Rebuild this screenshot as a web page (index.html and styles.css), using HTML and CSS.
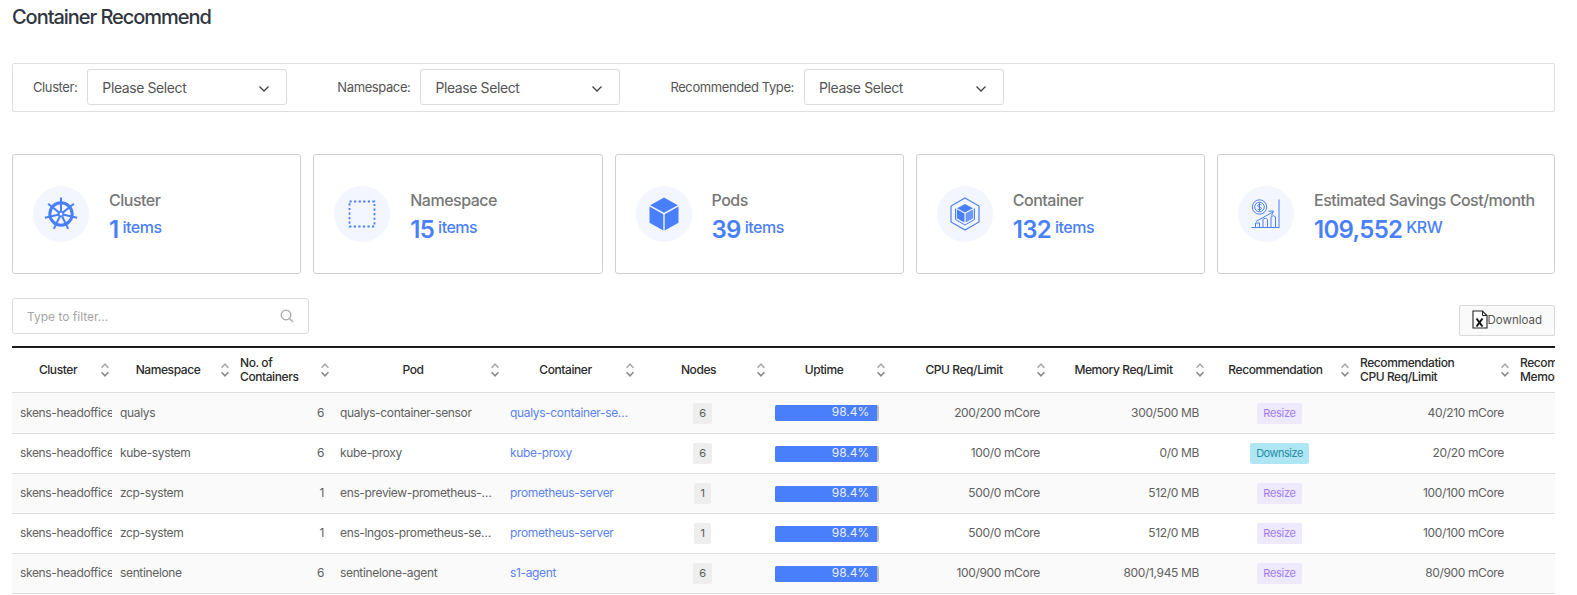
FILE: index.html
```html
<!DOCTYPE html>
<html lang="en">
<head>
<meta charset="utf-8">
<title>Container Recommend</title>
<link rel="stylesheet" href="styles.css">
</head>
<body>
<svg class="defs" width="0" height="0" aria-hidden="true">
  <symbol id="sort" viewBox="0 0 8 14">
    <path class="sort-up" d="M.6 4.800 4 1.200 7.400 4.800"/>
    <path class="sort-down" d="M.6 9.200 4 12.800 7.400 9.200"/>
  </symbol>
  <symbol id="chev" viewBox="0 0 12 8">
    <path d="M1.500 1.500 6 6l4.500-4.500" fill="none" stroke="#444" stroke-width="1.300"/>
  </symbol>
</svg>
<main class="page">
  <h1 class="title">Container Recommend</h1>

  <section class="filters">
    <label class="filter-label">Cluster:</label>
    <div class="select"><span>Please Select</span><svg class="chev"><use href="#chev"/></svg></div>
    <label class="filter-label gap">Namespace:</label>
    <div class="select"><span>Please Select</span><svg class="chev"><use href="#chev"/></svg></div>
    <label class="filter-label gap">Recommended Type:</label>
    <div class="select"><span>Please Select</span><svg class="chev"><use href="#chev"/></svg></div>
  </section>

  <section class="cards">
    <article class="card">
      <div class="bubble">
        <svg width="36" height="36" viewBox="-18 -18 36 36">
          <g class="helm">
            <circle r="11.200" fill="none" stroke-width="3"/>
            <circle r="2.400" fill="none" stroke-width="1.800"/>
            <line y1="-3" y2="-16.500"/>
            <line y1="-3" y2="-16.500" transform="rotate(51.430)"/>
            <line y1="-3" y2="-16.500" transform="rotate(102.860)"/>
            <line y1="-3" y2="-16.500" transform="rotate(154.290)"/>
            <line y1="-3" y2="-16.500" transform="rotate(205.710)"/>
            <line y1="-3" y2="-16.500" transform="rotate(257.140)"/>
            <line y1="-3" y2="-16.500" transform="rotate(308.570)"/>
          </g>
        </svg>
      </div>
      <div class="card-text">
        <div class="card-label">Cluster</div>
        <div class="card-value"><strong>1</strong><span>items</span></div>
      </div>
    </article>
    <article class="card">
      <div class="bubble">
        <svg width="28" height="28" viewBox="0 0 28 28">
          <rect x="1.500" y="1.500" width="25" height="25" fill="none" stroke="#4a7ffb" stroke-width="1.800" stroke-dasharray="2.200 2.370"/>
        </svg>
      </div>
      <div class="card-text">
        <div class="card-label">Namespace</div>
        <div class="card-value"><strong>15</strong><span>items</span></div>
      </div>
    </article>
    <article class="card">
      <div class="bubble">
        <svg width="30" height="34" viewBox="0 0 30 34">
          <path fill="#4a7ffb" d="M15 .500 28.800 8.200 15 15.800 1.200 8.200z"/>
          <path fill="#4a7ffb" d="M.500 9.500 14.300 17.200V33.500L.500 25.800z"/>
          <path fill="#4a7ffb" d="M29.500 9.500 15.700 17.200V33.500L29.500 25.800z"/>
        </svg>
      </div>
      <div class="card-text">
        <div class="card-label">Pods</div>
        <div class="card-value"><strong>39</strong><span>items</span></div>
      </div>
    </article>
    <article class="card">
      <div class="bubble">
        <svg width="30" height="34" viewBox="0 0 30 34">
          <path fill="none" stroke="#4a7ffb" stroke-width="1.200" d="M15 1 29 9v16l-14 8-14-8V9z"/>
          <path fill="none" stroke="#4a7ffb" stroke-width="1" d="M5.500 11.500v11L15 28l9.500-5.500v-11"/>
          <path fill="#4a7ffb" d="M15 7 23 11.200 15 15.600 7 11.200z"/>
          <path fill="#4a7ffb" d="M6.800 12.300 14.400 16.500V25.500L6.800 21.200z"/>
          <path fill="#4a7ffb" opacity=".8" d="M23.200 12.300 15.600 16.500V25.500L23.200 21.200z"/>
        </svg>
      </div>
      <div class="card-text">
        <div class="card-label">Container</div>
        <div class="card-value"><strong>132</strong><span>items</span></div>
      </div>
    </article>
    <article class="card card-wide">
      <div class="bubble">
        <svg width="30" height="30" viewBox="0 0 30 30">
          <g fill="none" stroke="#4a7ffb" stroke-width="1">
            <circle cx="8.500" cy="8" r="7.200"/>
            <circle cx="8.500" cy="8" r="4.800"/>
            <path d="M10.300 6c-1-1-3.600-.8-3.600.7 0 1.800 3.700.8 3.700 2.700 0 1.500-2.700 1.600-3.800.6M8.500 3.800v8.400"/>
            <path d="M5 22.500 22 13M17.500 12.200l5-.2-2 4.500"/>
            <path d="M28 .5V28M.5 28.500h28"/>
            <path d="M4.500 28v-4h4v4M12 28v-7.500c0-1.500 4.500-1.500 4.500 0V28M20 28V18c0-1.500 4.500-1.500 4.500 0v10"/>
          </g>
        </svg>
      </div>
      <div class="card-text">
        <div class="card-label">Estimated Savings Cost/month</div>
        <div class="card-value"><strong>109,552</strong><span>KRW</span></div>
      </div>
    </article>
  </section>

  <section class="toolbar">
    <div class="search">
      <span class="placeholder">Type to filter...</span>
      <svg width="14" height="14" viewBox="0 0 14 14" fill="none" stroke="#a8a8a8" stroke-width="1.300"><circle cx="6" cy="6" r="4.800"/><path d="M9.500 9.500 13 13"/></svg>
    </div>
    <button class="download" type="button">
      <svg width="16" height="19" viewBox="0 0 16 19">
        <path d="M1 1h9.500L15 5.500V18H1z" fill="#fff" stroke="#222" stroke-width="1.100"/>
        <path d="M10.500 1v4.500H15" fill="none" stroke="#222"/>
        <path d="M4.500 8.500 10.500 16.500M10.500 8.500 4.500 16.500" stroke="#111" stroke-width="2"/>
      </svg>
      <span>Download</span>
    </button>
  </section>

  <div class="table-wrap">
    <table class="grid">
      <colgroup>
        <col class="c1"><col class="c2"><col class="c3"><col class="c4"><col class="c5"><col class="c6">
        <col class="c7"><col class="c8"><col class="c9"><col class="c10"><col class="c11"><col class="c12">
      </colgroup>
      <thead>
        <tr>
          <th><div class="th"><span class="th-label">Cluster</span><svg class="sort"><use href="#sort"/></svg></div></th>
          <th><div class="th"><span class="th-label">Namespace</span><svg class="sort"><use href="#sort"/></svg></div></th>
          <th><div class="th"><span class="th-label left">No. of<br>Containers</span><svg class="sort"><use href="#sort"/></svg></div></th>
          <th><div class="th"><span class="th-label">Pod</span><svg class="sort"><use href="#sort"/></svg></div></th>
          <th><div class="th"><span class="th-label">Container</span><svg class="sort"><use href="#sort"/></svg></div></th>
          <th><div class="th"><span class="th-label">Nodes</span><svg class="sort"><use href="#sort"/></svg></div></th>
          <th><div class="th"><span class="th-label">Uptime</span><svg class="sort"><use href="#sort"/></svg></div></th>
          <th><div class="th"><span class="th-label">CPU Req/Limit</span><svg class="sort"><use href="#sort"/></svg></div></th>
          <th><div class="th"><span class="th-label">Memory Req/Limit</span><svg class="sort"><use href="#sort"/></svg></div></th>
          <th><div class="th"><span class="th-label">Recommendation</span><svg class="sort"><use href="#sort"/></svg></div></th>
          <th><div class="th"><span class="th-label left">Recommendation<br>CPU Req/Limit</span><svg class="sort"><use href="#sort"/></svg></div></th>
          <th><div class="th"><span class="th-label left">Recommendation<br>Memory Req/Limit</span><svg class="sort"><use href="#sort"/></svg></div></th>
        </tr>
      </thead>
      <tbody>
        <tr>
          <td class="clip">skens-headoffice</td><td>qualys</td><td class="num">6</td><td class="ell">qualys-container-sensor</td>
          <td class="ell link">qualys-container-sensor</td><td class="mid"><span class="tag">6</span></td>
          <td class="up"><div class="bar"><div class="fill">98.4%</div></div></td>
          <td class="num">200/200 mCore</td><td class="num">300/500 MB</td>
          <td class="mid"><span class="tag resize">Resize</span></td><td class="num">40/210 mCore</td><td class="num"></td>
        </tr>
        <tr>
          <td class="clip">skens-headoffice</td><td>kube-system</td><td class="num">6</td><td class="ell">kube-proxy</td>
          <td class="ell link">kube-proxy</td><td class="mid"><span class="tag">6</span></td>
          <td class="up"><div class="bar"><div class="fill">98.4%</div></div></td>
          <td class="num">100/0 mCore</td><td class="num">0/0 MB</td>
          <td class="mid"><span class="tag downsize">Downsize</span></td><td class="num">20/20 mCore</td><td class="num"></td>
        </tr>
        <tr>
          <td class="clip">skens-headoffice</td><td>zcp-system</td><td class="num">1</td><td class="ell">ens-preview-prometheus-server</td>
          <td class="ell link">prometheus-server</td><td class="mid"><span class="tag">1</span></td>
          <td class="up"><div class="bar"><div class="fill">98.4%</div></div></td>
          <td class="num">500/0 mCore</td><td class="num">512/0 MB</td>
          <td class="mid"><span class="tag resize">Resize</span></td><td class="num">100/100 mCore</td><td class="num"></td>
        </tr>
        <tr>
          <td class="clip">skens-headoffice</td><td>zcp-system</td><td class="num">1</td><td class="ell">ens-lngos-prometheus-server</td>
          <td class="ell link">prometheus-server</td><td class="mid"><span class="tag">1</span></td>
          <td class="up"><div class="bar"><div class="fill">98.4%</div></div></td>
          <td class="num">500/0 mCore</td><td class="num">512/0 MB</td>
          <td class="mid"><span class="tag resize">Resize</span></td><td class="num">100/100 mCore</td><td class="num"></td>
        </tr>
        <tr>
          <td class="clip">skens-headoffice</td><td>sentinelone</td><td class="num">6</td><td class="ell">sentinelone-agent</td>
          <td class="ell link">s1-agent</td><td class="mid"><span class="tag">6</span></td>
          <td class="up"><div class="bar"><div class="fill">98.4%</div></div></td>
          <td class="num">100/900 mCore</td><td class="num">800/1,945 MB</td>
          <td class="mid"><span class="tag resize">Resize</span></td><td class="num">80/900 mCore</td><td class="num"></td>
        </tr>
      </tbody>
    </table>
  </div>
</main>
</body>
</html>
```

FILE: styles.css
```css
* { box-sizing: border-box; }
html, body { margin: 0; padding: 0; background: #fff; height: 595px; overflow: hidden; }
body { font-family: Inter, "Liberation Sans", sans-serif; color: #555; }
.defs { position: absolute; }
.page { padding: 5px 22px 0 12px; }

.title { margin: 0; font-size: 20px; line-height: 24px; font-weight: 500; color: #2f3640; letter-spacing: -1.05px; }

.filters {
  display: flex; align-items: center; margin-top: 34px; height: 49px;
  padding: 0 20px 1px; border: 1px solid #e0e0e0; border-radius: 2px;
}
.filter-label { font-size: 13px; font-weight: 400; color: #555; margin-right: 10px; white-space: nowrap; letter-spacing: -0.4px; }
.filter-label.gap { margin-left: 50px; }
.select {
  display: flex; align-items: center; justify-content: space-between;
  width: 200px; height: 36px; padding: 0 16px 0 14px;
  border: 1px solid #dcdcdc; border-radius: 3px; font-size: 14px; color: #555; letter-spacing: -0.4px;
}
.chev { width: 12px; height: 8px; margin-top: 4px; }

.cards { display: flex; gap: 12px; margin-top: 42px; }
.card {
  flex: 1 1 0; min-width: 0; display: flex; align-items: center; gap: 20px; height: 120px;
  padding: 0 20px; border: 1px solid #cfcfcf; border-radius: 3px;
}
.card-wide { flex: 0 0 338px; }
.bubble {
  flex: none; width: 56px; height: 56px; border-radius: 50%; background: #f3f6fe;
  display: flex; align-items: center; justify-content: center;
}
.helm { stroke: #4a7ffb; stroke-width: 2; }
.card-text { padding-top: 2px; }
.card-label { font-size: 16px; line-height: 24px; font-weight: 500; color: #777; white-space: nowrap; letter-spacing: -0.5px; }
.card-value { display: flex; align-items: center; gap: 4px; color: #4a7ffb; line-height: 30px; margin-top: 1px; }
.card-value strong { font-size: 24px; font-weight: 600; position: relative; top: 2px; letter-spacing: -0.7px; }
.card-value span { font-size: 16px; font-weight: 500; position: relative; top: -1px; letter-spacing: -0.5px; }

.toolbar { display: flex; justify-content: space-between; height: 38px; margin-top: 24px; }
.search {
  display: flex; align-items: center; justify-content: space-between;
  width: 297px; height: 36px; padding: 0 14px 0 14px;
  border: 1px solid #dcdcdc; border-radius: 3px;
}
.placeholder { font-size: 12px; color: #a6a6a6; }
.download {
  align-self: flex-end; display: flex; align-items: center; justify-content: flex-end;
  width: 96px; height: 31px; padding: 0 12px 2px 0;
  background: #fafafa; border: 1px solid #d9d9d9; border-radius: 2px;
  font-family: inherit; font-size: 11.5px; color: #555;
}

.table-wrap { margin-top: 10px; width: 1543px; overflow: hidden; border-top: 2px solid #1c1c1c; }
.grid { table-layout: fixed; width: 1660px; border-collapse: separate; border-spacing: 0; font-size: 12px; }
.c1 { width: 100px; } .c2 { width: 120px; } .c3 { width: 100px; } .c4 { width: 170px; }
.c5 { width: 135px; } .c6 { width: 131px; } .c7 { width: 120px; } .c8 { width: 160px; }
.c9 { width: 159px; } .c10 { width: 145px; } .c11 { width: 160px; } .c12 { width: 160px; }

th { padding: 0; height: 45px; border-bottom: 1px solid #dedede; font-weight: 500; color: #2a2a2a; letter-spacing: -0.42px; }
.th { display: flex; align-items: center; height: 44px; padding-left: 8px; }
.th-label { flex: 1; text-align: center; line-height: 14px; white-space: nowrap; overflow: hidden; }
.th-label.left { text-align: left; }
.sort { flex: none; width: 8px; height: 14px; margin: 0 3.5px 0 4.5px; }
.sort-up, .sort-down { fill: none; stroke-width: 1.6; }
.sort-up { stroke: #ababab; }
.sort-down { stroke: #8a8a8a; }

td {
  height: 40px; padding: 0 8px 2px; border-bottom: 1px solid #dedede;
  color: #606060; white-space: nowrap; overflow: hidden; letter-spacing: -0.35px;
}
tbody tr:first-child td { height: 41px; }
tbody tr:nth-child(odd) td { background: #fafafa; }
.clip { padding-right: 0; }
.num { text-align: right; }
.mid { text-align: center; padding-bottom: 0; }
.up { padding-bottom: 0; }
.ell { text-overflow: ellipsis; }
.link { color: #5b82ee; }

.tag {
  display: inline-block; height: 21px; line-height: 21px; padding: 0 6px;
  border-radius: 2px; background: #eeeeee; font-size: 11px; color: #5a5a5a; vertical-align: middle; letter-spacing: -0.3px;
}
.resize { background: #efe9fd; color: #a17cf0; }
.downsize { background: #aee7f3; color: #2b8aa3; letter-spacing: -0.5px; }

.bar { width: 104px; height: 16px; margin-left: -1px; background: #bdbdbd; border-radius: 2px; overflow: hidden; }
.fill {
  width: 98.4%; height: 100%; background: #4a7ffb; color: #e8eeff; letter-spacing: 0;
  text-align: right; padding-right: 8px; font-size: 12px; line-height: 14px;
}
```
